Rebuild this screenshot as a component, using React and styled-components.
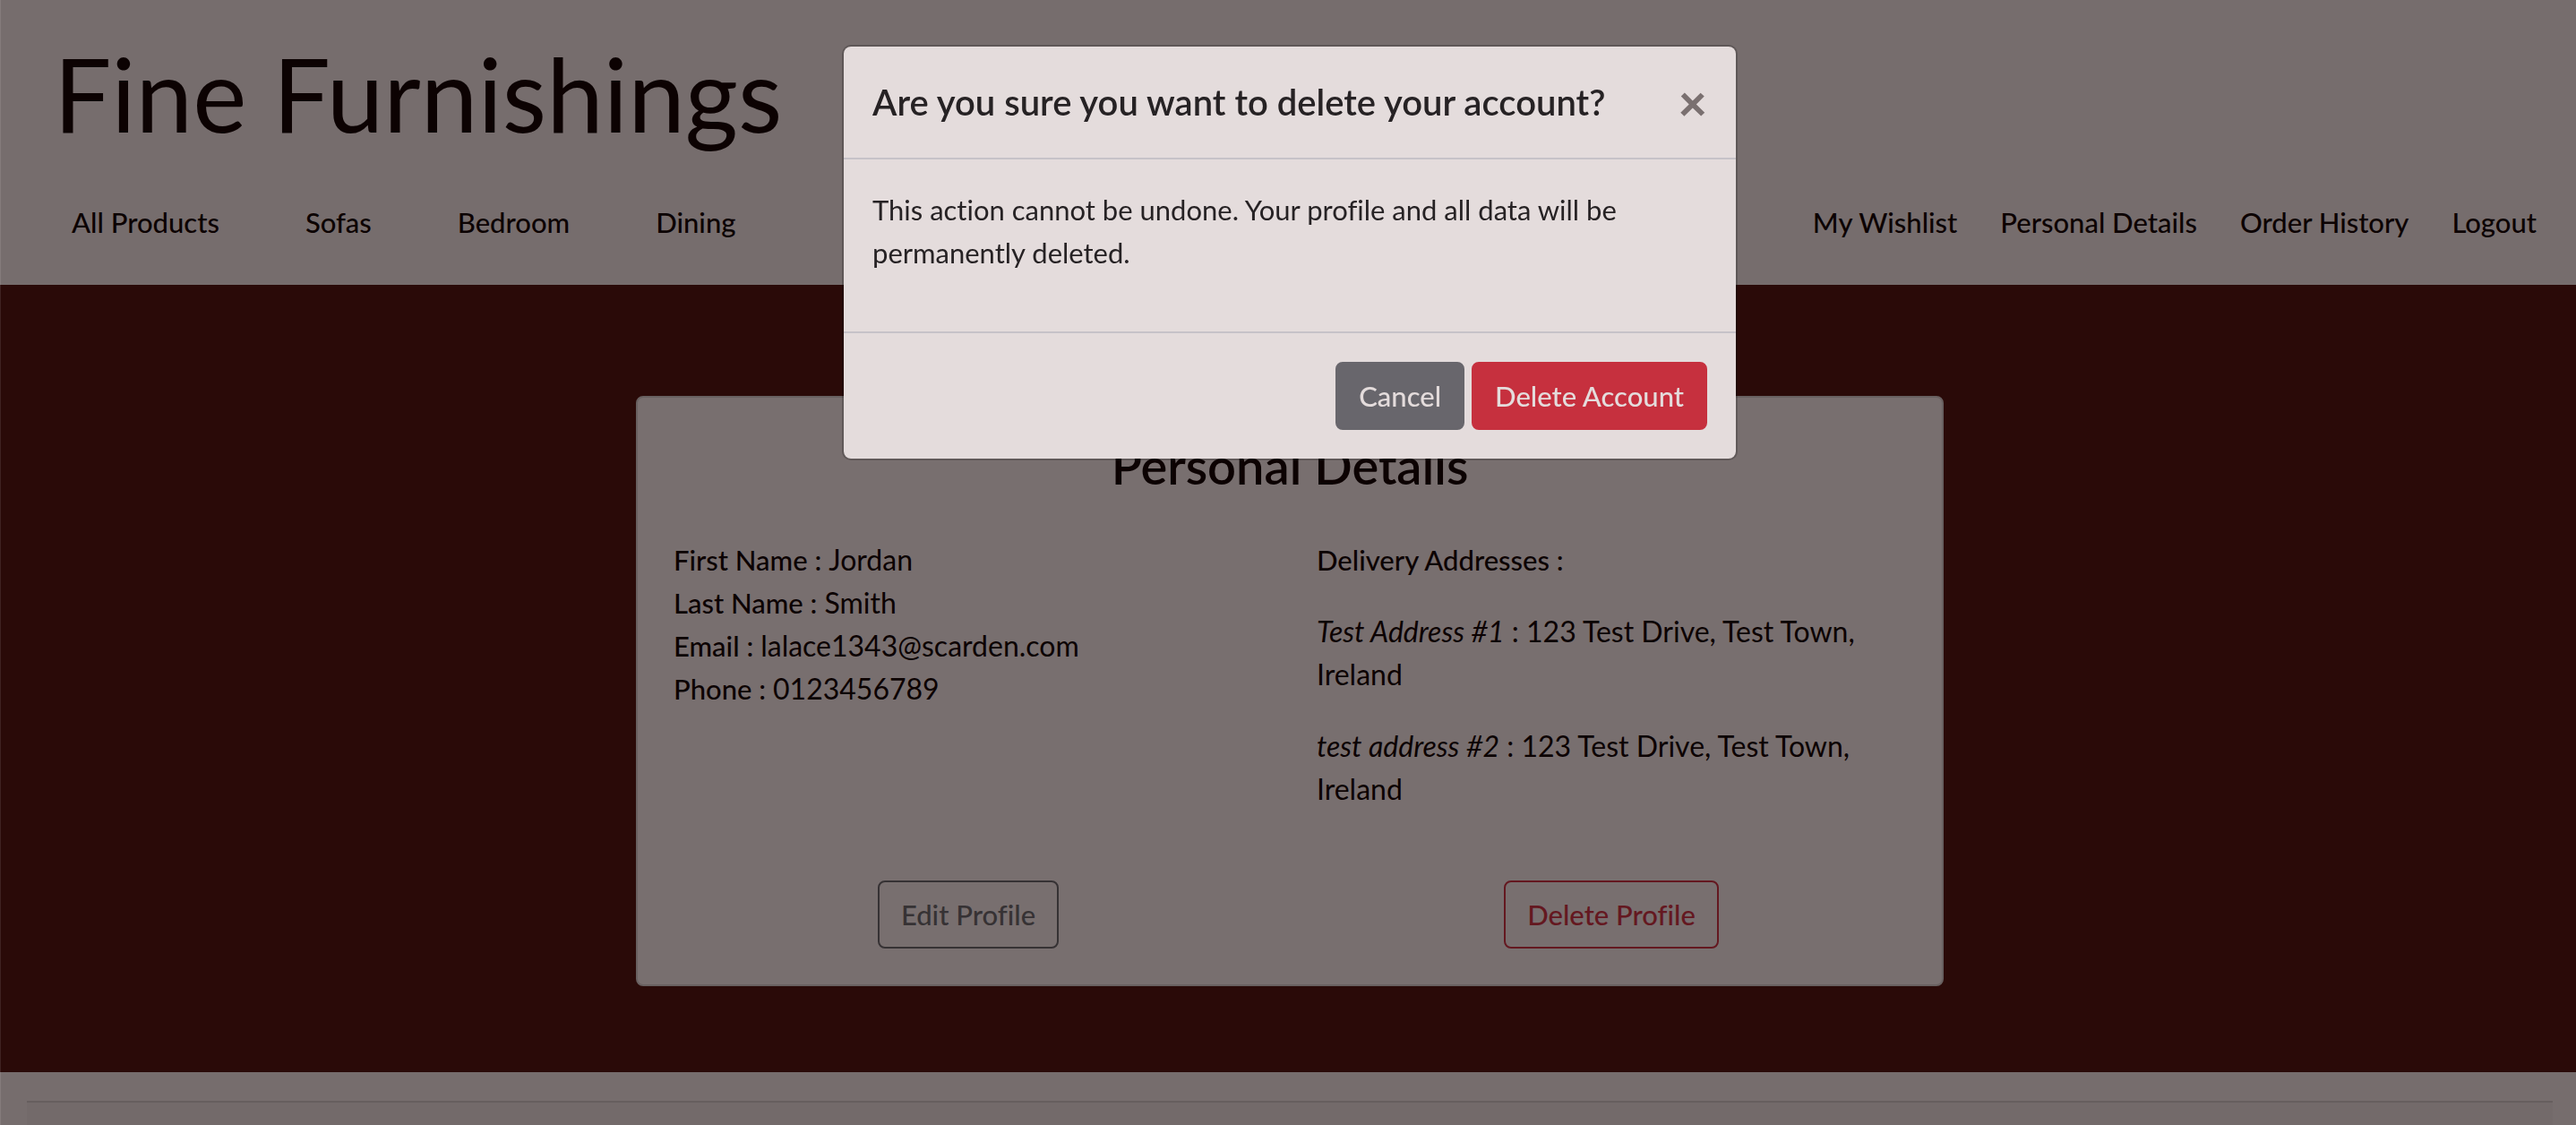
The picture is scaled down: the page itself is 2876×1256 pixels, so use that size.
import React from "react";
import styled, { createGlobalStyle } from "styled-components";

const GlobalStyle = createGlobalStyle`
  *, *::before, *::after { box-sizing: border-box; }
  body {
    margin: 0;
    background: #ecdada;
    color: #180404;
    font-family: Lato, "Open Sans", sans-serif;
    font-size: 31px;
    font-variant-ligatures: no-common-ligatures;
    line-height: 48px;
    overflow: hidden;
  }
  h1, h2, p, dl, dd { margin: 0; }
`;

const Page = styled.div`
  min-height: 100vh;
  display: flex;
  flex-direction: column;
`;

const Header = styled.header`
  display: flex;
  flex-direction: column;
  padding: 32px 44px 46px 60px;
`;

const Brand = styled.a`
  align-self: flex-start;
  color: inherit;
  font-size: 114px;
  font-weight: 400;
  line-height: 144px;
  text-decoration: none;
`;

const NavRow = styled.div`
  display: flex;
  justify-content: space-between;
  padding: 48px 0 0 20px;
`;

const Nav = styled.nav`
  display: flex;
  gap: ${(p) => p.$gap}px;
`;

const NavLink = styled.a`
  color: inherit;
  font-weight: 500;
  text-decoration: none;
`;

const Stage = styled.main`
  display: flex;
  justify-content: center;
  padding: 124px 0 96px 4px;
  background: #541410;
`;

const Card = styled.section`
  width: 1460px;
  max-width: 100%;
  padding: 42px 10px 40px;
  border: 2px solid #d0c0c0;
  border-radius: 8px;
  background: #f0dede;
`;

const CardTitle = styled.h1`
  font-size: 56px;
  font-weight: 600;
  line-height: 67px;
  text-align: center;
`;

const Columns = styled.div`
  display: grid;
  grid-template-columns: 1fr 1fr;
  padding-top: 48px;
`;

const Column = styled.div`
  display: flex;
  flex-direction: column;
  gap: 32px;
  padding: 0 30px;
`;

const Details = styled.dl`
  display: flex;
  flex-direction: column;
`;

const DetailRow = styled.div`
  display: flex;
  gap: 8px;
`;

const Label = styled.dt`
  font-weight: 500;
`;

const Value = styled.dd`
  font-size: 32px;
`;

const Subheading = styled.p`
  font-weight: 500;
`;

const Address = styled.p`
  font-size: 32px;
`;

const Actions = styled.div`
  display: grid;
  grid-template-columns: 1fr 1fr;
  justify-items: center;
  padding-top: 78px;
`;

const Button = styled.button`
  padding: 12px 24px;
  border: 2px solid ${(p) => p.$line};
  border-radius: 8px;
  background: ${(p) => p.$fill || "transparent"};
  color: ${(p) => p.$ink};
  font: inherit;
  font-weight: 500;
`;

const Footer = styled.footer`
  flex: 1;
  display: flex;
  padding: 32px 26px 0 30px;
`;

const FooterPanel = styled.div`
  flex: 1;
  border-top: 2px solid #ccbcbc;
  background: #e6d4d4;
`;

const Backdrop = styled.div`
  position: fixed;
  inset: 0;
  display: flex;
  justify-content: center;
  align-items: flex-start;
  padding: 50px 0 0 3px;
  border-left: 1px solid rgba(255, 255, 255, 0.1);
  background: rgba(0, 0, 0, 0.5);
`;

const Dialog = styled.div`
  width: 1000px;
  border: 2px solid rgba(0, 0, 0, 0.2);
  border-radius: 10px;
  background: #e4dcdc;
  background-clip: padding-box;
  color: #262224;
`;

const DialogHeader = styled.div`
  display: flex;
  justify-content: space-between;
  align-items: flex-start;
  padding: 32px;
  border-bottom: 2px solid #c6c2c8;
`;

const DialogTitle = styled.h2`
  font-size: 40px;
  font-weight: 600;
  line-height: 60px;
`;

const CloseButton = styled.button`
  padding: 0;
  border: 0;
  background: transparent;
  color: #7a7070;
  font: inherit;
  font-size: 56px;
  font-weight: 900;
  line-height: 60px;
`;

const DialogBody = styled.div`
  padding: 32px 32px 64px;
`;

const DialogFooter = styled.div`
  display: flex;
  justify-content: flex-end;
  gap: 8px;
  padding: 32px;
  border-top: 2px solid #c6c2c8;
`;

const shopLinks = ["All Products", "Sofas", "Bedroom", "Dining"];
const accountLinks = ["My Wishlist", "Personal Details", "Order History", "Logout"];
const profile = [
  ["First Name", "Jordan"],
  ["Last Name", "Smith"],
  ["Email", "lalace1343@scarden.com"],
  ["Phone", "0123456789"],
];
const addresses = [
  ["Test Address #1", "123 Test Drive, Test Town, Ireland"],
  ["test address #2", "123 Test Drive, Test Town, Ireland"],
];

function LinkList({ label, links, gap }) {
  return (
    <Nav aria-label={label} $gap={gap}>
      {links.map((text) => (
        <NavLink key={text} href="#">{text}</NavLink>
      ))}
    </Nav>
  );
}

export default function App() {
  return (
    <>
      <GlobalStyle />
      <Page>
        <Header>
          <Brand href="#">Fine Furnishings</Brand>
          <NavRow>
            <LinkList label="Shop" links={shopLinks} gap={96} />
            <LinkList label="Account" links={accountLinks} gap={48} />
          </NavRow>
        </Header>
        <Stage>
          <Card>
            <CardTitle>Personal Details</CardTitle>
            <Columns>
              <Column>
                <Details>
                  {profile.map(([name, value]) => (
                    <DetailRow key={name}>
                      <Label>{name} :</Label>
                      <Value>{value}</Value>
                    </DetailRow>
                  ))}
                </Details>
              </Column>
              <Column>
                <Subheading>Delivery Addresses :</Subheading>
                {addresses.map(([name, value]) => (
                  <Address key={name}>
                    <em>{name}</em> : {value}
                  </Address>
                ))}
              </Column>
            </Columns>
            <Actions>
              <Button $line="#6c6468" $ink="#6c6468">Edit Profile</Button>
              <Button $line="#c83040" $ink="#c83040">Delete Profile</Button>
            </Actions>
          </Card>
        </Stage>
        <Footer>
          <FooterPanel />
        </Footer>
      </Page>
      <Backdrop>
        <Dialog role="dialog" aria-modal="true" aria-labelledby="dialog-title">
          <DialogHeader>
            <DialogTitle id="dialog-title">Are you sure you want to delete your account?</DialogTitle>
            <CloseButton aria-label="Close">×</CloseButton>
          </DialogHeader>
          <DialogBody>
            <p>This action cannot be undone. Your profile and all data will be permanently deleted.</p>
          </DialogBody>
          <DialogFooter>
            <Button $fill="#68666c" $line="#68666c" $ink="#e4dcdc">Cancel</Button>
            <Button $fill="#c6303e" $line="#c6303e" $ink="#e4dcdc">Delete Account</Button>
          </DialogFooter>
        </Dialog>
      </Backdrop>
    </>
  );
}
